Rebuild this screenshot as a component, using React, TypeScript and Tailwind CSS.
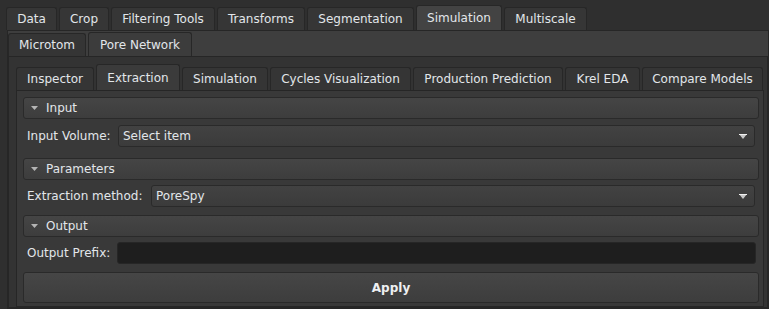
import React from 'react';

const topTabs = [
  { label: 'Data', w: 'w-[51px]' },
  { label: 'Crop', w: 'w-[50px]' },
  { label: 'Filtering Tools', w: 'w-[104px]' },
  { label: 'Transforms', w: 'w-[88px]' },
  { label: 'Segmentation', w: 'w-[107px]' },
  { label: 'Simulation', w: 'w-[86px]', active: true },
  { label: 'Multiscale', w: 'w-[83px]' },
];

const subTabs = [
  { label: 'Microtom', w: 'w-[78px]' },
  { label: 'Pore Network', w: 'w-[104px]', active: true },
];

const pnTabs = [
  { label: 'Inspector', w: 'w-[78px]' },
  { label: 'Extraction', w: 'w-[84px]', active: true },
  { label: 'Simulation', w: 'w-[86px]' },
  { label: 'Cycles Visualization', w: 'w-[141px]' },
  { label: 'Production Prediction', w: 'w-[150px]' },
  { label: 'Krel EDA', w: 'w-[75px]' },
  { label: 'Compare Models', w: 'w-[121px]' },
];

type Tab = { label: string; w: string; active?: boolean };

const TabButton = ({ tab, h, hActive, bg, bgActive }: { tab: Tab; h: string; hActive: string; bg: string; bgActive: string }) => (
  <div
    className={`${tab.w} ${tab.active ? `${hActive} ${bgActive}` : `${h} ${bg}`} flex items-center justify-center border border-b-0 border-[#272727] rounded-t-[3px] shrink-0`}
  >
    {tab.label}
  </div>
);

const SectionHeader = ({ title, className }: { title: string; className: string }) => (
  <div className={`${className} h-[22px] mr-[4px] flex items-center border border-[#2a2a2a] rounded-[3px] bg-gradient-to-b from-[#454545] to-[#3d3d3d]`}>
    <svg width="7" height="4" viewBox="0 0 7 4" className="ml-[7px]">
      <path d="M0 0 L7 0 L3.5 4 Z" fill="#b4b4b4" />
    </svg>
    <span className="ml-[8px]">{title}</span>
  </div>
);

const ComboArrow = () => (
  <svg width="8" height="5" viewBox="0 0 8 5" className="mr-[7px]">
    <path d="M0 0 L8 0 L4 5 Z" fill="#c8c8c8" />
    <path d="M0 0.5 L8 0.5" stroke="#f0f0f0" strokeWidth="1" />
  </svg>
);

const Combo = ({ value }: { value: string }) => (
  <div className="flex-1 h-[22px] flex items-center justify-between border border-[#2a2a2a] rounded-[3px] bg-gradient-to-b from-[#424242] to-[#3b3b3b]">
    <span className="ml-[4px]">{value}</span>
    <ComboArrow />
  </div>
);

export default function App() {
  return (
    <div className="w-[769px] h-[309px] overflow-hidden bg-[#2f2f2f] text-[#e2e6ea] text-[12px] font-['DejaVu_Sans',sans-serif] leading-none">
      {/* top-level tabs */}
      <div className="h-[30px] flex items-end gap-[2px] pl-[6px]">
        {topTabs.map((t) => (
          <TabButton key={t.label} tab={t} h="h-[23px]" hActive="h-[25px]" bg="bg-[#363636]" bgActive="bg-[#434343]" />
        ))}
      </div>

      <div className="ml-[7px] w-[762px] h-[279px] border border-[#262626] bg-[#3e3e3e] flex flex-col">
        {/* second-level tabs */}
        <div className="h-[25px] flex items-end gap-[2px] shrink-0">
          {subTabs.map((t) => (
            <TabButton key={t.label} tab={t} h="h-[23px]" hActive="h-[24px]" bg="bg-[#353535]" bgActive="bg-[#3c3c3c]" />
          ))}
        </div>

        <div className="flex-1 border border-[#262626] bg-[#333333] pl-[7px] pr-[3px] pt-[7px] flex flex-col">
          {/* pore network tabs */}
          <div className="h-[26px] flex items-end gap-[2px] shrink-0">
            {pnTabs.map((t) => (
              <TabButton key={t.label} tab={t} h="h-[23px]" hActive="h-[26px]" bg="bg-[#353535]" bgActive="bg-[#3b3b3b]" />
            ))}
          </div>

          <div className="flex-1 border border-[#262626] bg-[#393939] pl-[6px] pt-[6px] flex flex-col">
            <SectionHeader title="Input" className="" />
            <div className="mt-[6px] mr-[8px] pl-[4px] flex items-center">
              <span className="w-[91px]">Input Volume:</span>
              <Combo value="Select item" />
            </div>

            <SectionHeader title="Parameters" className="mt-[11px]" />
            <div className="mt-[5px] mr-[8px] pl-[4px] flex items-center">
              <span className="w-[124px]">Extraction method:</span>
              <Combo value="PoreSpy" />
            </div>

            <SectionHeader title="Output" className="mt-[8px]" />
            <div className="mt-[5px] mr-[7px] pl-[4px] flex items-center">
              <span className="w-[90px]">Output Prefix:</span>
              <div className="flex-1 h-[22px] rounded-[3px] bg-[#1e1e1e] border border-[#262626]" />
            </div>

            <button className="mt-[8px] mr-[4px] h-[31px] flex items-center justify-center border border-[#2a2a2a] rounded-[3px] bg-gradient-to-b from-[#464646] to-[#3d3d3d] font-bold text-[#eef0f2]">
              Apply
            </button>
          </div>
        </div>
      </div>
    </div>
  );
}
